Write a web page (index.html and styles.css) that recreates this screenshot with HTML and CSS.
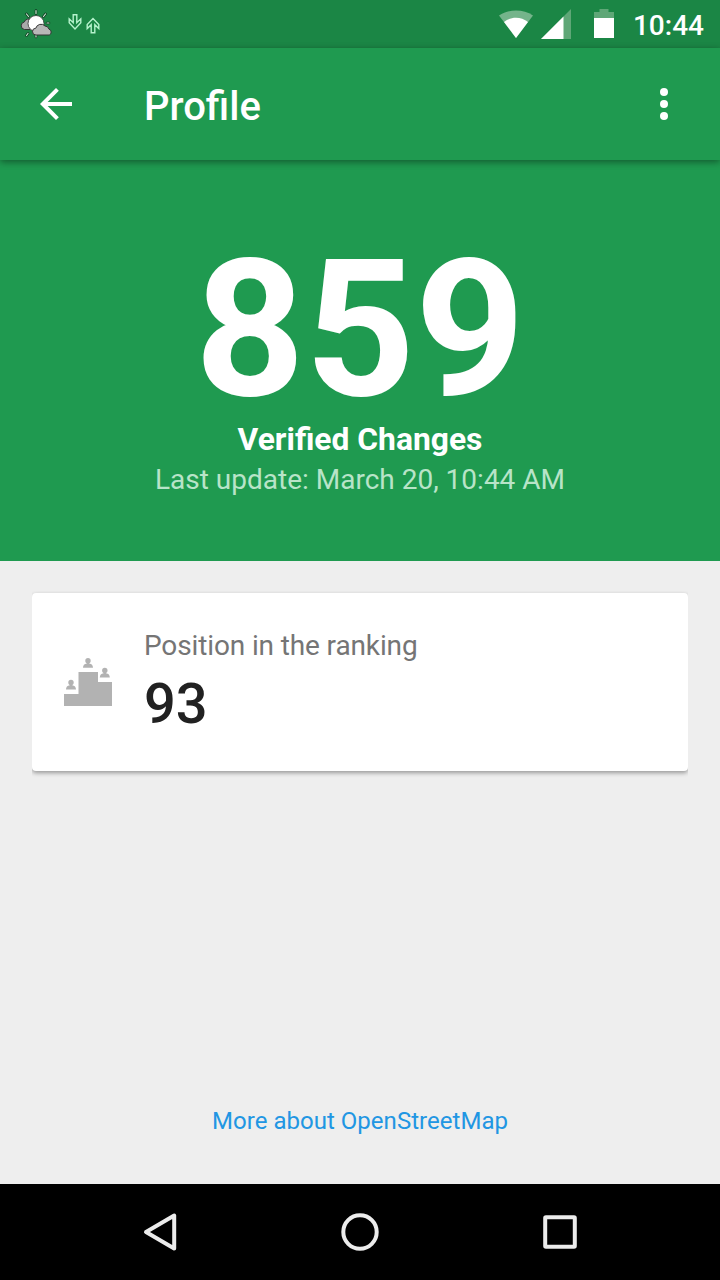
FILE: index.html
```html
<!DOCTYPE html>
<html lang="en">
<head>
<meta charset="utf-8">
<title>Profile</title>
<link rel="stylesheet" href="styles.css">
</head>
<body>
<div class="screen">
  <div class="status-bar">
    <svg class="weather" width="36" height="32" viewBox="0 0 36 32">
      <g stroke="#12331f" stroke-width="2.6" stroke-linecap="round"><path d="M18 2.500v3M8.500 6l2 2.500M27.500 6l-2 2.500M29 15h2M18 27v2M10 25.500l-1.500 2"/></g>
      <g stroke="#c6f0d2" stroke-width="1.200" stroke-linecap="round"><path d="M18 2.500v3M8.500 6l2 2.500M27.500 6l-2 2.500M29 15h2M18 27v2M10 25.500l-1.500 2"/></g>
      <path d="M6.500 21.500a3.800 3.800 0 0 1-.2-7.500 4.200 4.200 0 0 1 7.200-1.500l3 9z" fill="#a9a9a9" stroke="#353535"/>
      <circle cx="18" cy="15.500" r="8" fill="#fff" stroke="#353535" stroke-width=".8"/>
      <path d="M18 27a3.400 3.400 0 0 1-.2-6.800 5.400 5.400 0 0 1 9.200-2.200 4.300 4.300 0 0 1 4 3.200 3.100 3.100 0 0 1 .3 5.800z" fill="#b7b7b7" stroke="#353535"/>
    </svg>
    <svg class="transfer" width="36" height="24" viewBox="0 0 36 24" fill="none" stroke="#b5f2cc" stroke-width="1.400">
      <path d="M5.200 2.700h3.600v8l4-3.900v4L7 17l-5.800-6.200v-4l4 3.900z"/>
      <path d="M23.200 20.700h3.600v-8l4 3.900v-4L25 6.400l-5.800 6.200v4l4-3.900z"/>
    </svg>
    <div class="system">
      <svg class="wifi" width="36" height="32" viewBox="0 0 36 32">
        <path d="M1 7.500C10.500 .8 25.500 .8 35 7.500L18 30z" fill="#75b48b"/>
        <path d="M6 14C13 8.300 23 8.300 30 14L18 30z" fill="#fff"/>
      </svg>
      <svg class="signal" width="30" height="30" viewBox="0 0 30 30">
        <path d="M30 0v30H0z" fill="#5fa777"/>
        <path d="M22.500 7.500V30H0z" fill="#fff"/>
      </svg>
      <svg class="battery" width="20" height="29" viewBox="0 0 20 29">
        <path d="M5.500 0h9v3H20v7H0V3h5.500z" fill="#5fa777"/>
        <path d="M0 9h20v20H0z" fill="#fff"/>
      </svg>
      <span class="clock">10:44</span>
    </div>
  </div>

  <header class="app-bar">
    <svg width="48" height="48" viewBox="0 0 24 24" fill="#fff"><path d="M20 11H7.830l5.590-5.590L12 4l-8 8 8 8 1.410-1.410L7.830 13H20v-2z"/></svg>
    <h1 class="title">Profile</h1>
    <svg width="48" height="48" viewBox="0 0 24 24" fill="#fff"><circle cx="12" cy="6" r="2"/><circle cx="12" cy="12" r="2"/><circle cx="12" cy="18" r="2"/></svg>
  </header>

  <section class="hero">
    <div class="count">859</div>
    <div class="count-label">Verified Changes</div>
    <div class="updated">Last update: March 20, 10:44 AM</div>
  </section>

  <main class="content">
    <div class="card-clip">
      <article class="card">
        <svg width="48" height="48" viewBox="0 0 48 48" fill="#b2b2b2">
          <path d="M0 36h14.500V14H34v10h14v24H0z"/>
          <g id="person"><circle cx="24" cy="2.700" r="2.700"/><path d="M22.800 4h2.400v1.500c2.500.4 3.800 1.800 3.800 4.300H19c0-2.500 1.300-3.900 3.800-4.300z"/></g>
          <use href="#person" x="-17" y="21.700"/>
          <use href="#person" x="16.800" y="9.700"/>
        </svg>
        <div class="card-text">
          <div class="card-label">Position in the ranking</div>
          <div class="card-value">93</div>
        </div>
      </article>
    </div>
    <a class="more">More about OpenStreetMap</a>
  </main>

  <nav class="nav-bar">
    <svg width="48" height="48" viewBox="0 0 48 48"><path d="M38.200 7.500v33L10 24z"/></svg>
    <svg width="48" height="48" viewBox="0 0 48 48"><circle cx="24" cy="24" r="16.700"/></svg>
    <svg width="48" height="48" viewBox="0 0 48 48"><rect x="9.200" y="9.200" width="29.600" height="29.600" rx=".8"/></svg>
  </nav>
</div>
</body>
</html>
```
FILE: styles.css
```css
* { box-sizing: border-box; }

body {
  margin: 0;
  font-family: Roboto, "Liberation Sans", sans-serif;
}

svg { display: block; flex: none; }

.screen {
  display: flex;
  flex-direction: column;
  width: 720px;
  height: 1280px;
  background: #eee;
  overflow: hidden;
}

.status-bar {
  display: flex;
  align-items: flex-start;
  height: 48px;
  padding: 8px 16px 0 18px;
  background: #1b8645;
  color: #fff;
}

.transfer { margin: 4px 0 0 14px; }

.system {
  display: flex;
  margin-left: auto;
}

.signal { margin: 1px 0 0 7px; }
.battery { margin: 1px 0 0 23px; }

.clock {
  margin: 2px 0 0 19px;
  font-size: 28px;
  font-weight: 500;
  line-height: 32px;
}

.app-bar {
  display: flex;
  align-items: center;
  height: 112px;
  padding: 0 32px;
  background: #1f9a50;
  box-shadow: 0 2px 7px rgba(0, 0, 0, .42);
  z-index: 1;
}

.title {
  flex: 1;
  margin: 6px 0 0 64px;
  color: #fff;
  font-size: 40px;
  font-weight: 500;
  letter-spacing: 0;
  line-height: 48px;
}

.hero {
  height: 401px;
  padding-top: 80px;
  background: #1f9a50;
  color: #fff;
  text-align: center;
}

.count {
  font-size: 192px;
  font-weight: 700;
  line-height: 180px;
}

.count-label {
  margin-bottom: 6px;
  font-size: 31.8px;
  font-weight: 700;
  line-height: 38px;
}

.updated {
  color: #b8e4c8;
  font-size: 28px;
  line-height: 32px;
}

.content {
  display: flex;
  flex: 1;
  flex-direction: column;
  align-items: center;
  padding: 30px 32px 49px;
}

/* Keeps the card shadow from spreading past its sides */
.card-clip {
  width: 656px;
  padding: 2px 0 10px;
  overflow: hidden;
}

.card {
  display: flex;
  height: 178px;
  align-items: center;
  padding: 0 32px;
  border-radius: 4px;
  background: #fff;
  box-shadow: 0 2px 4px rgba(0, 0, 0, .36);
}

.card-text { margin: 2px 0 0 32px; }

.card-label {
  margin-bottom: 10px;
  color: #757575;
  font-size: 28px;
  letter-spacing: -.13px;
  line-height: 32px;
}

.card-value {
  color: #212121;
  font-size: 56px;
  font-weight: 500;
  line-height: 64px;
}

.more {
  margin-top: auto;
  color: #2196e3;
  font-size: 24px;
  letter-spacing: .03px;
  line-height: 28px;
}

.nav-bar {
  display: flex;
  justify-content: center;
  align-items: center;
  gap: 152px;
  height: 96px;
  background: #000;
  fill: none;
  stroke: #ececec;
  stroke-width: 4;
  stroke-linejoin: round;
}
```
